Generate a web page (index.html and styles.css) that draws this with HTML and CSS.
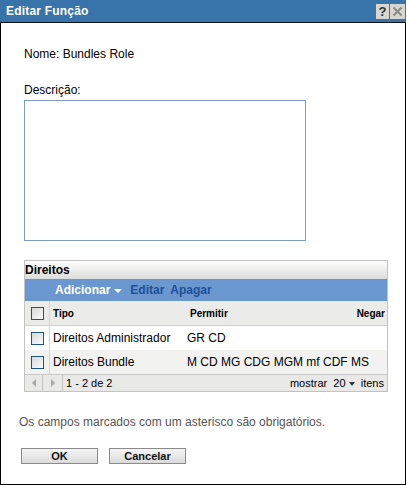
FILE: index.html
```html
<!DOCTYPE html>
<html lang="pt">
<head>
    <meta charset="UTF-8">
    <title>Editar Função</title>
    <link rel="stylesheet" href="styles.css">
</head>
<body>
    <div class="dialog">
        <div class="titlebar">
            <span class="title">Editar Função</span>
            <div class="title-buttons">
                <span class="tbtn help">?</span>
                <span class="tbtn close">
                    <svg width="11" height="11" viewBox="0 0 11 11">
                        <path d="M1.5 1.5 L9.5 9.5 M9.5 1.5 L1.5 9.5" stroke="#8a8a8a" stroke-width="2" fill="none"/>
                    </svg>
                </span>
            </div>
        </div>

        <div class="content">
            <p class="field-name">Nome: Bundles Role</p>
            <label class="desc-label" for="desc">Descrição:</label>
            <textarea class="desc" id="desc"></textarea>

            <div class="panel">
                <div class="panel-head">Direitos</div>
                <div class="toolbar">
                    <span class="tool add">Adicionar <span class="caret"></span></span>
                    <span class="tool">Editar</span>
                    <span class="tool">Apagar</span>
                </div>
                <div class="grid">
                    <div class="row head">
                        <div class="cell check"><span class="box"></span></div>
                        <div class="cell">Tipo</div>
                        <div class="cell allow">Permitir</div>
                        <div class="cell deny">Negar</div>
                    </div>
                    <div class="row">
                        <div class="cell check"><span class="box"></span></div>
                        <div class="cell">Direitos Administrador</div>
                        <div class="cell allow">GR CD</div>
                        <div class="cell deny"></div>
                    </div>
                    <div class="row alt">
                        <div class="cell check"><span class="box"></span></div>
                        <div class="cell">Direitos Bundle</div>
                        <div class="cell allow">M CD MG CDG MGM mf CDF MS</div>
                        <div class="cell deny"></div>
                    </div>
                </div>
                <div class="pager">
                    <span class="nav"><span class="arrow left"></span></span>
                    <span class="nav"><span class="arrow right"></span></span>
                    <span class="range">1 - 2 de 2</span>
                    <span class="show">mostrar&nbsp; 20 <span class="caret dark"></span>&nbsp; itens</span>
                </div>
            </div>
        </div>

        <div class="footer">
            <p class="note">Os campos marcados com um asterisco são obrigatórios.</p>
            <div class="actions">
                <button class="btn">OK</button>
                <button class="btn">Cancelar</button>
            </div>
        </div>
    </div>
</body>
</html>
```

FILE: styles.css
```css
* {
    margin: 0;
    padding: 0;
    box-sizing: border-box;
}

body {
    font-family: "Liberation Sans", Arial, sans-serif;
    font-size: 12px;
    color: #000;
    background: #fff;
}

.dialog {
    width: 406px;
    height: 485px;
    border: 1px solid #000;
    border-top: none;
    display: flex;
    flex-direction: column;
}

.titlebar {
    height: 23px;
    margin: 0 -1px;
    background: #3874a9;
    border-bottom: 1px solid #111;
    display: flex;
    align-items: center;
    justify-content: space-between;
    padding-left: 6px;
    padding-right: 1px;
}

.title {
    color: #fff;
    font-weight: bold;
    font-size: 12px;
    letter-spacing: 0.2px;
    margin-top: -1px;
}

.title-buttons {
    display: flex;
    gap: 1px;
    margin-top: 1px;
}

.tbtn {
    width: 13px;
    height: 15px;
    background: #d8d6d0;
    display: flex;
    align-items: center;
    justify-content: center;
    font-weight: bold;
    font-size: 13px;
    color: #333;
}

.tbtn.close {
    width: 15px;
}

.content {
    padding: 24px 0 0 23px;
}

.field-name {
    line-height: 14px;
}

.desc-label {
    display: block;
    margin-top: 22px;
    line-height: 14px;
}

.desc {
    display: block;
    margin-top: 3px;
    width: 282px;
    height: 141px;
    border: 1px solid #7c9cc0;
    resize: none;
    font-family: inherit;
}

.panel {
    margin-top: 19px;
    width: 364px;
    border: 1px solid #c2c2c2;
}

.panel-head {
    height: 18px;
    line-height: 18px;
    font-weight: bold;
    background: linear-gradient(#ffffff, #dcdcda);
}

.toolbar {
    height: 22px;
    background: #6a97cf;
    display: flex;
    align-items: center;
    padding-left: 30px;
    gap: 6px;
    font-weight: bold;
}

.tool {
    color: #1e4f98;
}

.tool.add {
    color: #fff;
    display: flex;
    align-items: center;
    gap: 4px;
    margin-right: 2px;
}

.caret {
    display: inline-block;
    width: 0;
    height: 0;
    border-left: 4px solid transparent;
    border-right: 4px solid transparent;
    border-top: 4px solid #fff;
    margin-top: 1px;
}

.caret.dark {
    border-top-color: #333;
    border-left-width: 3px;
    border-right-width: 3px;
    vertical-align: 1px;
}

.row {
    display: grid;
    grid-template-columns: 25px 137px 1fr auto;
    height: 24px;
    align-items: center;
    background: #fff;
}

.row.head {
    height: 25px;
    background: #ebebe9;
    border-bottom: 1px solid #cfcfcf;
    font-weight: bold;
    font-size: 10px;
}

.row.alt {
    background: #f2f2f0;
}

.cell {
    padding-left: 3px;
    white-space: nowrap;
}

.cell.check {
    height: 100%;
    border-right: 1px solid #d4d4d4;
    padding-left: 6px;
    display: flex;
    align-items: center;
}

.cell.allow {
    padding-left: 0;
}

.row.head .cell.allow {
    padding-left: 3px;
}

.cell.deny {
    padding-right: 2px;
    text-align: right;
}

.box {
    width: 13px;
    height: 13px;
    border: 1px solid #1d5685;
    background: linear-gradient(135deg, #d8d8d8, #fbfbfb);
}

.pager {
    height: 17px;
    background: #e9e9e7;
    border-top: 1px solid #c8c8c8;
    display: flex;
    align-items: center;
    font-size: 11px;
}

.nav {
    height: 100%;
    border-right: 1px solid #c2c2c2;
    display: flex;
    align-items: center;
    justify-content: center;
}

.nav:first-child {
    width: 18px;
}

.nav:nth-child(2) {
    width: 20px;
}

.arrow {
    width: 0;
    height: 0;
    border-top: 4px solid transparent;
    border-bottom: 4px solid transparent;
}

.arrow.left {
    border-right: 4px solid #a8a8a8;
}

.arrow.right {
    border-left: 4px solid #a8a8a8;
}

.range {
    padding-left: 3px;
    flex: 1;
}

.show {
    padding-right: 3px;
}

.footer {
    padding-left: 18px;
}

.note {
    margin-top: 23px;
    color: #555;
    line-height: 14px;
}

.actions {
    display: flex;
    gap: 11px;
    margin-top: 19px;
    padding-left: 2px;
}

.btn {
    width: 77px;
    height: 16px;
    border: 1px solid #8a8a8a;
    background: linear-gradient(#f6f6f6, #dadada);
    font-family: "Liberation Sans", Arial, sans-serif;
    font-weight: bold;
    font-size: 11px;
    color: #111;
    line-height: 14px;
}
```
